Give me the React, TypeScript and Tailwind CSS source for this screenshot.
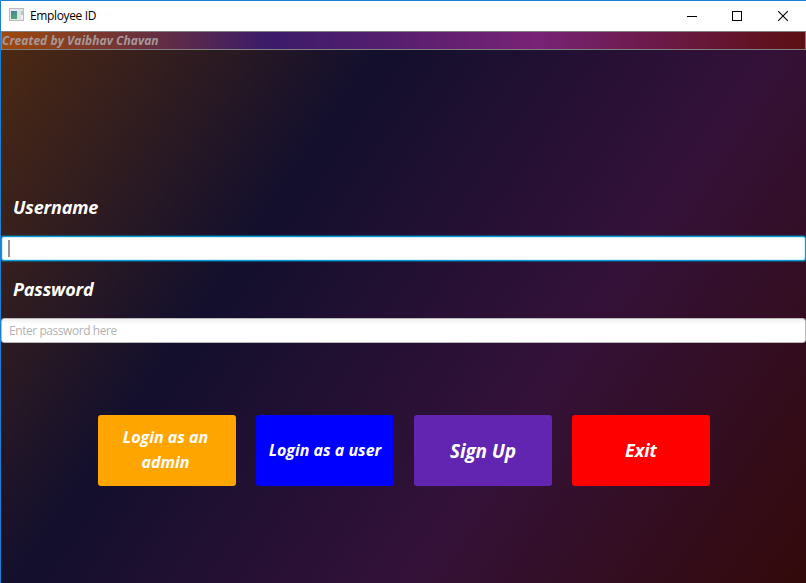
function AppIcon() {
  return (
    <svg width="16" height="13" viewBox="0 0 16 13" shapeRendering="crispEdges" className="-mt-[3px]">
      <defs>
        <linearGradient id="pane" x1="0" y1="0" x2="0.4" y2="1">
          <stop offset="0" stopColor="#4a7fa8" />
          <stop offset="1" stopColor="#4fa673" />
        </linearGradient>
      </defs>
      <rect width="15" height="13" fill="#b9bdc2" />
      <rect x="1" y="1" width="13" height="11" fill="#e3e6e9" />
      <rect x="2" y="3" width="6" height="8" fill="url(#pane)" />
      <rect x="8" y="3" width="3" height="8" fill="#dfe2e4" />
      <rect x="12" y="3" width="2" height="4" fill="#a9cdc9" />
      <rect x="12" y="7" width="2" height="4" fill="#eef1f2" />
    </svg>
  );
}

function TitleBar() {
  return (
    <header className="flex h-[30px] items-center bg-white pl-2">
      <AppIcon />
      <h1 className="ml-[5px] font-['Open_Sans','Noto_Sans',sans-serif] text-[12px] leading-[16px] tracking-[-0.36px] text-black">
        Employee ID
      </h1>
      <div className="ml-auto flex h-full text-black">
        <button className="flex w-[46px] items-center justify-center" aria-label="Minimize">
          <svg width="10" height="10" shapeRendering="crispEdges">
            <rect y="5" width="10" height="1" fill="currentColor" />
          </svg>
        </button>
        <button className="flex w-[44px] items-center justify-center" aria-label="Maximize">
          <svg width="10" height="10" shapeRendering="crispEdges">
            <rect x="0.5" y="0.5" width="9" height="9" fill="none" stroke="currentColor" />
          </svg>
        </button>
        <button className="flex w-[47px] items-center justify-center pl-[1px]" aria-label="Close">
          <svg width="10" height="10">
            <path d="M0 0L10 10M10 0L0 10" stroke="currentColor" strokeWidth="1.1" />
          </svg>
        </button>
      </div>
    </header>
  );
}

const actions = [
  { label: "Login as an admin", style: "bg-[#ffa500] text-[16px] pl-[10px] pr-[13px] pb-[1px]" },
  { label: "Login as a user", style: "bg-[#0000ff] text-[16px] px-3" },
  { label: "Sign Up", style: "bg-[#6225b1] text-[19px] tracking-[-0.1px] px-3 pt-[1px]" },
  { label: "Exit", style: "bg-[#ff0000] text-[18px] px-3" },
];

export default function App() {
  return (
    <div className="flex h-[583px] w-[806px] flex-col overflow-hidden border-t border-l border-[#1a80d5] font-['Open_Sans','Noto_Sans',sans-serif]">
      <TitleBar />
      <main className="flex flex-1 flex-col bg-[linear-gradient(124.44deg,#4e2a12_0%,#130f2d_33.3%,#341138_66.6%,#330a0a_100%)]">
        <div className="flex h-[19px] items-center border border-[#808080] bg-[linear-gradient(90deg,#9e490c_0%,#3b1b6a_33.3%,#782375_66.6%,#5c0f12_100%)] text-[12px] font-bold italic text-[#a5999b]">
          <span className="tracking-[0.05px] whitespace-nowrap">Created by Vaibhav Chavan</span>
        </div>

        <form className="mt-[144px] flex flex-col">
          <label htmlFor="user" className="h-[42px] pl-3 text-[18px] leading-[26px] font-bold tracking-[-0.15px] text-white italic">
            Username
          </label>
          <div className="flex h-[25px] items-center rounded-[3px] border border-[#039ed3] bg-white pl-[6px] shadow-[0_0_1px_1px_#0d7fb280,inset_0_0_0_1px_#d8eff8]">
            <span className="h-[17px] w-[2px] bg-[#949494]" />
            <input id="user" className="min-w-0 flex-1 outline-none" />
          </div>
          <label htmlFor="pass" className="mt-[15px] h-[42px] pl-3 text-[18px] leading-[26px] font-bold tracking-[-0.15px] text-white italic">
            Password
          </label>
          <input
            id="pass"
            type="password"
            placeholder="Enter password here"
            className="h-[25px] rounded-[3px] border border-[#bababa] bg-[linear-gradient(#f0f0f0,#ffffff_5px)] px-[7px] text-[12px] tracking-[-0.44px] outline-none placeholder:text-[#b2b2b2]"
          />
        </form>

        <div className="mt-[72px] flex justify-center gap-5 pl-[1px]">
          {actions.map((a) => (
            <button
              key={a.label}
              className={`flex h-[71px] w-[138px] items-center justify-center rounded-[3px] text-center leading-[25px] font-bold text-white italic ${a.style}`}
            >
              {a.label}
            </button>
          ))}
        </div>
      </main>
    </div>
  );
}
